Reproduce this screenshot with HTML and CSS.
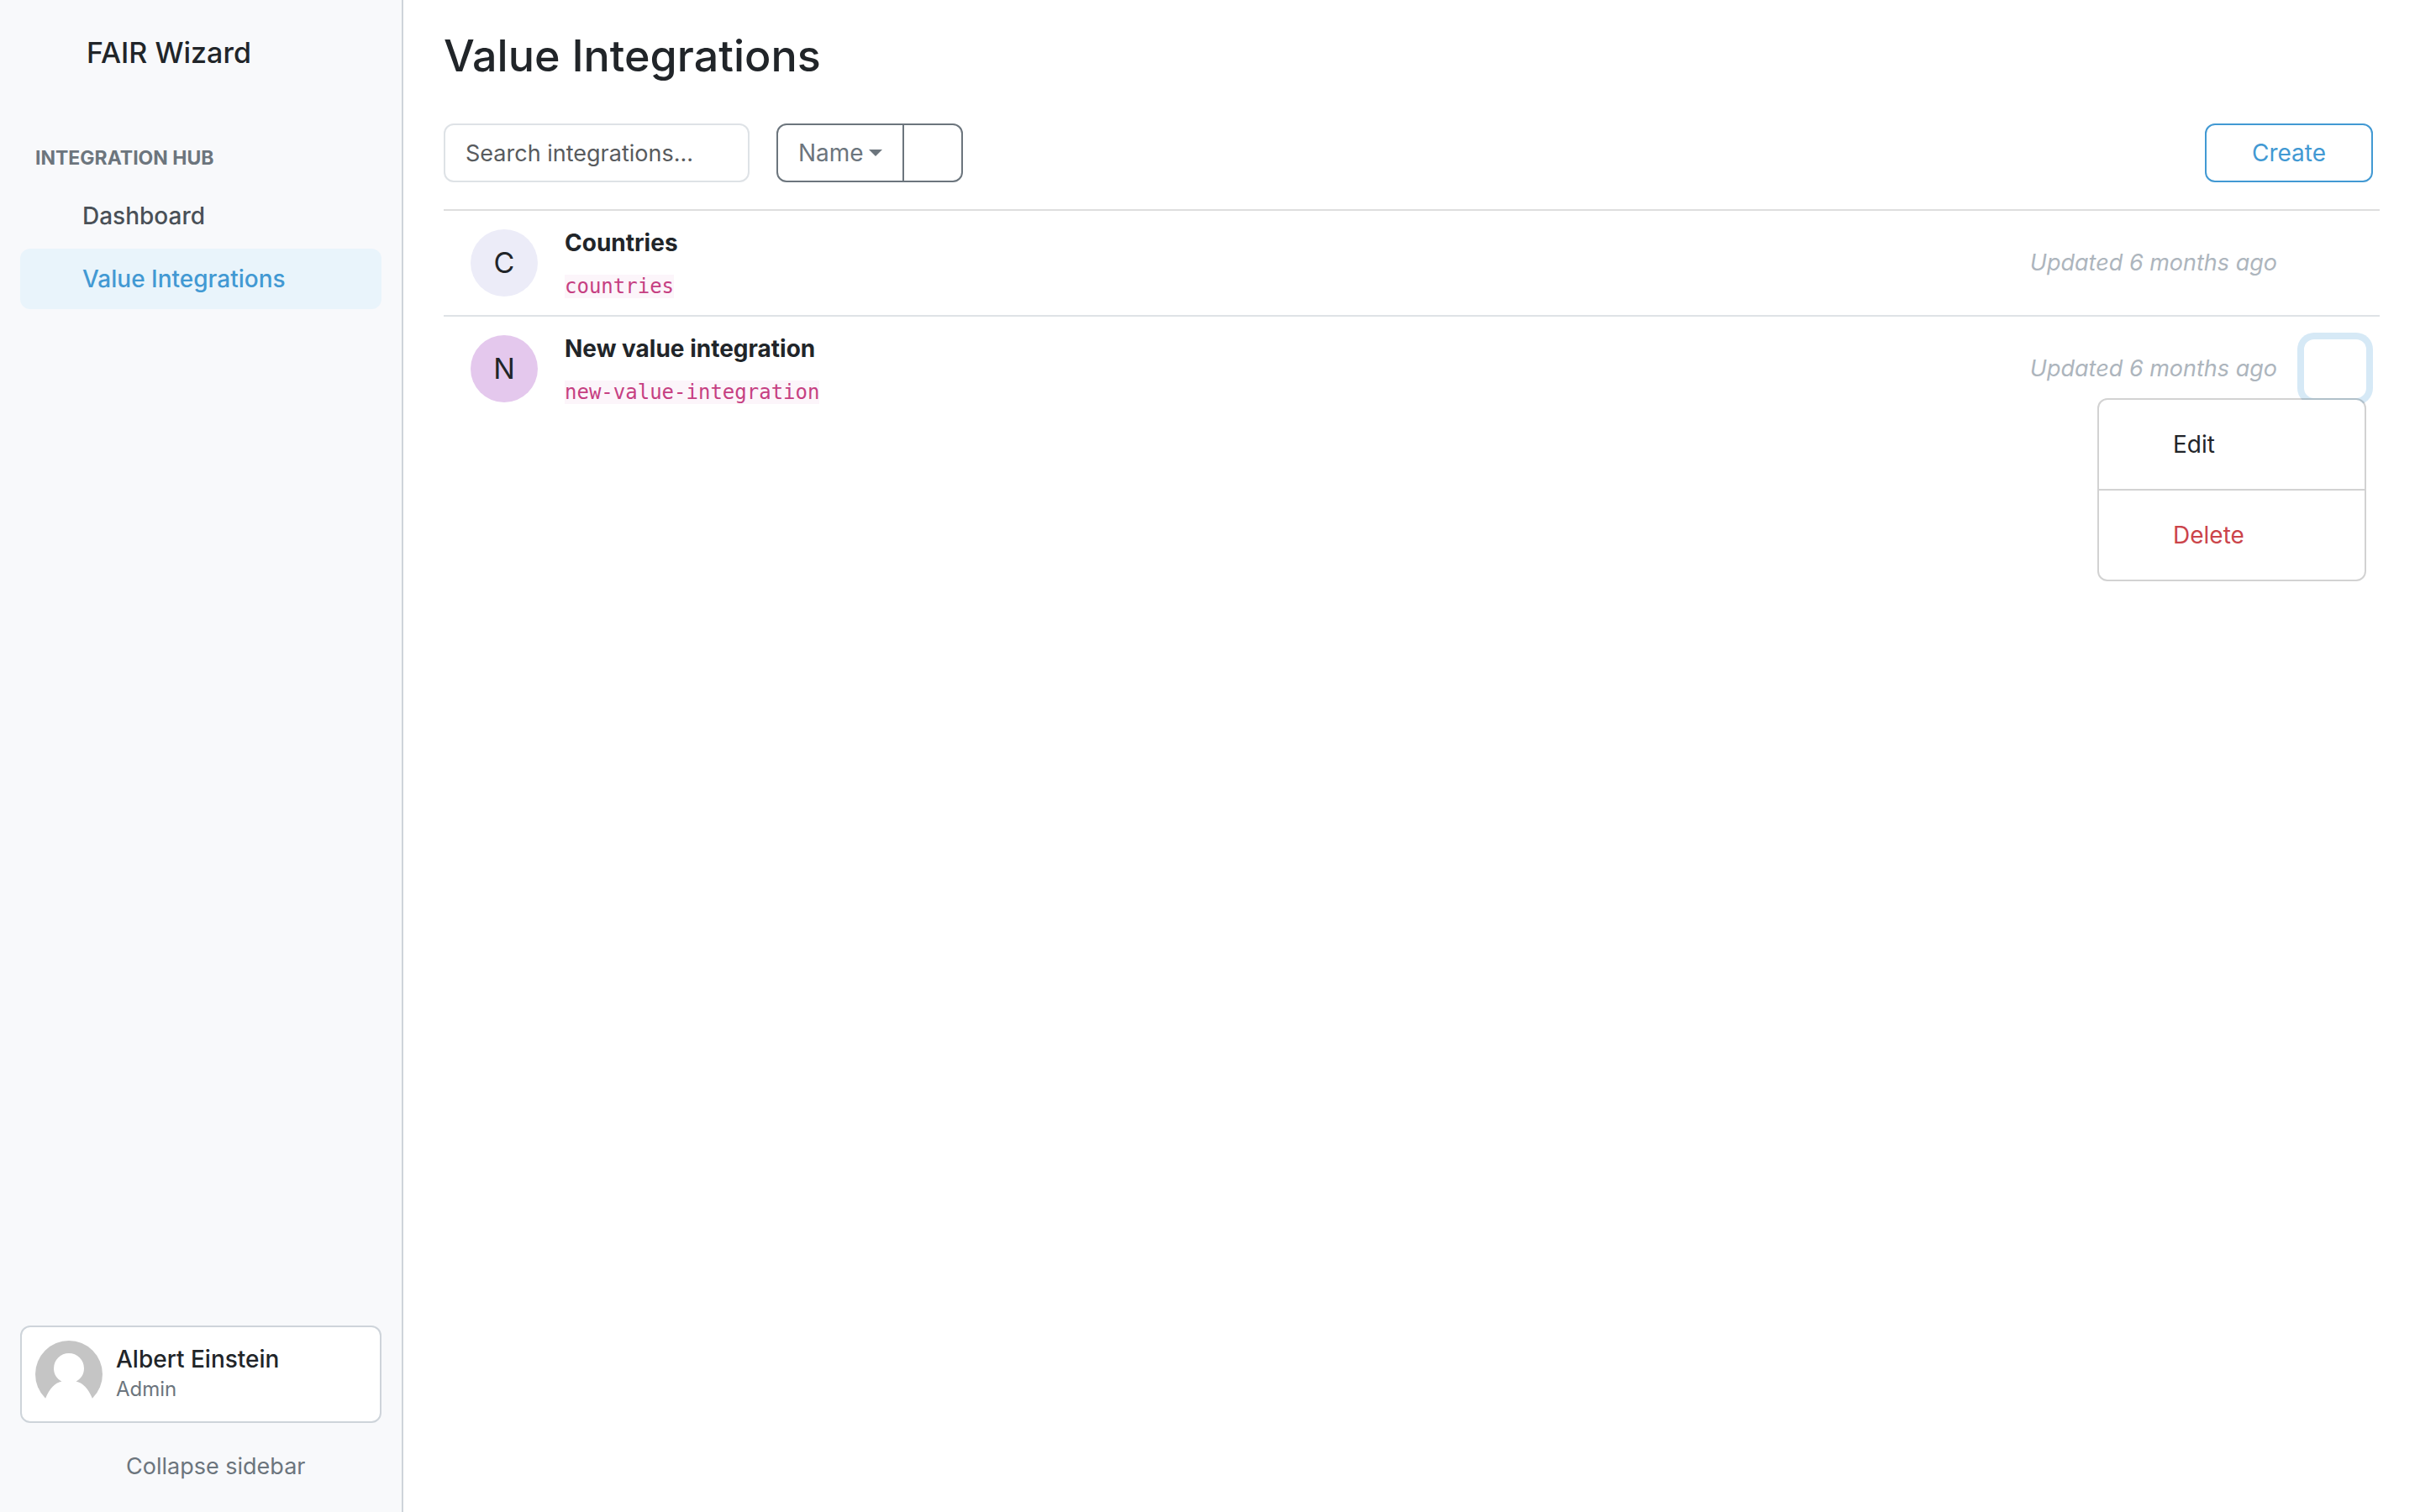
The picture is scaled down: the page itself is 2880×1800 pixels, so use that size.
FILE: index.html
```html
<!DOCTYPE html>
<html lang="en">
<head>
  <meta charset="utf-8">
  <meta name="viewport" content="width=device-width, initial-scale=1">
  <title>Value Integrations</title>
  <link rel="stylesheet" href="styles.css">
</head>
<body>
  <div class="layout">
    <aside class="sidebar">
      <a class="brand" href="#">FAIR Wizard</a>
      <nav class="menu" aria-labelledby="menu-heading">
        <h2 class="menu-heading" id="menu-heading">Integration Hub</h2>
        <ul class="menu-list">
          <li><a class="menu-link" href="#">Dashboard</a></li>
          <li><a class="menu-link menu-link-active" href="#" aria-current="page">Value Integrations</a></li>
        </ul>
      </nav>
      <div class="sidebar-footer">
        <button class="profile" type="button">
          <svg class="profile-avatar" viewBox="0 0 80 80" aria-hidden="true">
            <circle cx="40" cy="40" r="40" fill="#c5c5c5"/>
            <path d="M12 69C17 57 23 50.500 31.500 48.500C25.500 45.500 22 40 22 33a18 18 0 0 1 36 0C58 40 54.500 45.500 48.500 48.500C57 50.500 63 57 68 69L64 80H16Z" fill="#fff"/>
          </svg>
          <span class="profile-text">
            <span class="profile-name">Albert Einstein</span>
            <span class="profile-role">Admin</span>
          </span>
        </button>
        <button class="collapse" type="button">Collapse sidebar</button>
      </div>
    </aside>

    <main class="content">
      <h1 class="page-title">Value Integrations</h1>
      <div class="toolbar">
        <input class="search" type="text" placeholder="Search integrations..." aria-label="Search integrations">
        <div class="sort">
          <button class="btn sort-field" type="button">Name<span class="caret"></span></button>
          <button class="btn sort-order" type="button" aria-label="Sort order"></button>
        </div>
        <button class="btn btn-create" type="button">Create</button>
      </div>

      <ul class="list">
        <li class="row">
          <span class="badge badge-lavender">C</span>
          <div class="row-text">
            <a class="row-title" href="#">Countries</a>
            <span class="row-id"><code>countries</code></span>
          </div>
          <span class="updated">Updated 6 months ago</span>
          <div class="actions">
            <button class="actions-toggle" type="button" aria-label="Actions"></button>
          </div>
        </li>
        <li class="row">
          <span class="badge badge-orchid">N</span>
          <div class="row-text">
            <a class="row-title" href="#">New value integration</a>
            <span class="row-id"><code>new-value-integration</code></span>
          </div>
          <span class="updated">Updated 6 months ago</span>
          <div class="actions">
            <button class="actions-toggle actions-toggle-open" type="button" aria-label="Actions" aria-expanded="true"></button>
            <div class="dropdown">
              <a class="dropdown-item" href="#">Edit</a>
              <a class="dropdown-item dropdown-item-danger" href="#">Delete</a>
            </div>
          </div>
        </li>
      </ul>
    </main>
  </div>
</body>
</html>
```
FILE: styles.css
```css
*,
*::before,
*::after {
  box-sizing: border-box;
}

body {
  margin: 0;
  background: #fff;
  color: #212529;
  font-family: Inter, "Liberation Sans", sans-serif;
  font-size: 28px;
  line-height: 42px;
}

a {
  color: inherit;
  text-decoration: none;
}

button,
input {
  margin: 0;
  font: inherit;
}

button {
  cursor: pointer;
}

ul {
  margin: 0;
  padding: 0;
  list-style: none;
}

.layout {
  display: flex;
  min-height: 100vh;
}

/* Sidebar */

.sidebar {
  display: flex;
  flex-direction: column;
  flex: 0 0 480px;
  padding: 42px 24px 18px;
  border-right: 2px solid #ced4da;
  background: #f8f9fb;
}

.brand {
  padding-left: 79px;
  font-size: 34px;
  font-weight: 500;
}

.menu {
  margin-top: 86px;
}

.menu-heading {
  margin: 0 0 15px;
  padding-left: 18px;
  color: #6c757d;
  font-size: 23px;
  font-weight: 700;
  line-height: 36px;
  text-transform: uppercase;
}

.menu-list {
  display: grid;
  gap: 3px;
}

.menu-link {
  display: block;
  padding: 15px 16px 15px 74px;
  border-radius: 12px;
  color: #495057;
  font-weight: 500;
}

.menu-link-active {
  background: #e9f4fb;
  color: #4299d3;
}

.sidebar-footer {
  display: grid;
  gap: 16px;
  margin-top: auto;
}

.profile {
  display: flex;
  align-items: center;
  gap: 16px;
  padding: 16px;
  border: 2px solid #ced4da;
  border-radius: 12px;
  background: #fff;
  color: inherit;
  text-align: left;
}

.profile-avatar {
  width: 80px;
  height: 80px;
}

.profile-text {
  display: grid;
  line-height: 36px;
}

.profile-name {
  font-weight: 500;
}

.profile-role {
  color: #6c757d;
  font-size: 24px;
}

.collapse {
  padding: 15px 0 15px 126px;
  border: 0;
  background: none;
  color: #6c757d;
  font-size: 27px;
  text-align: left;
}

/* Page */

.content {
  flex: 1;
  min-width: 0;
  padding: 33px 48px;
}

.page-title {
  margin: 0 0 46px;
  font-size: 52px;
  font-weight: 500;
  line-height: 68px;
}

.toolbar {
  display: flex;
  gap: 32px;
  padding: 0 8px 32px 0;
  border-bottom: 2px solid #dedede;
}

.search {
  width: 364px;
  height: 70px;
  padding: 0 24px;
  border: 2px solid #dee2e6;
  border-radius: 12px;
  background: #fff;
  color: #212529;
  font-size: 27px;
}

.search::placeholder {
  color: #585b5e;
  opacity: 1;
}

.sort {
  display: flex;
}

.btn {
  display: flex;
  align-items: center;
  height: 70px;
  padding: 0 24px;
  border: 2px solid #6c757d;
  border-radius: 12px;
  background: transparent;
  color: #6c757d;
}

.sort-field {
  gap: 6px;
  border-radius: 12px 0 0 12px;
}

.caret {
  border: 8px solid transparent;
  border-top-color: currentColor;
  border-bottom: 0;
}

.sort-order {
  width: 72px;
  margin-left: -2px;
  border-radius: 0 12px 12px 0;
}

.btn-create {
  margin-left: auto;
  padding: 0 54px;
  border-color: #4299d3;
  color: #4299d3;
}

/* Integration list */

.row {
  display: flex;
  align-items: center;
  gap: 32px;
  padding: 10px 16px 10px 32px;
}

.row + .row {
  border-top: 2px solid #dee2e6;
}

.badge {
  display: grid;
  place-items: center;
  width: 80px;
  height: 80px;
  border-radius: 50%;
  font-size: 34px;
}

.badge-lavender {
  background: #ececf8;
}

.badge-orchid {
  background: #e4c8ed;
}

.row-text {
  display: flex;
  flex-direction: column;
  flex: 1;
}

.row-title {
  font-weight: 700;
  line-height: 56px;
}

.row-id {
  font-family: "DejaVu Sans Mono", monospace;
  font-size: 24px;
  line-height: 48px;
}

code {
  background: #fcf5fa;
  color: #c63f82;
  font: inherit;
}

.updated {
  color: #adb5bd;
  font-size: 27px;
  font-style: italic;
}

.actions {
  position: relative;
}

.actions-toggle {
  display: block;
  width: 74px;
  height: 70px;
  border: 0;
  border-radius: 12px;
  background: transparent;
}

.actions-toggle-open {
  box-shadow: 0 0 0 8px #d6e9f6;
}

.dropdown {
  position: absolute;
  top: 100%;
  right: 0;
  width: 320px;
  border: 2px solid rgba(0, 0, 0, 0.175);
  border-radius: 12px;
  background: #fff;
  background-clip: padding-box;
}

.dropdown-item {
  display: block;
  padding: 32px 16px 32px 88px;
}

.dropdown-item + .dropdown-item {
  border-top: 2px solid rgba(0, 0, 0, 0.175);
}

.dropdown-item-danger {
  color: #cb444a;
}
```
